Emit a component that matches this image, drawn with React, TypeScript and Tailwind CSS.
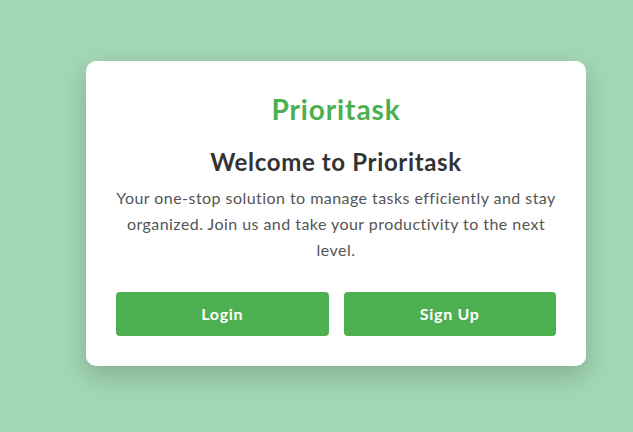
export default function App() {
  return (
    <div
      className="w-[633px] h-[432px] bg-[#a2d6b4] overflow-hidden pt-[61px] pl-[86px]"
      style={{ fontFamily: "Lato, 'Open Sans', sans-serif" }}
    >
      <div className="w-[500px] bg-white rounded-[10px] px-[30px] pt-[30px] pb-[30px] shadow-[0_10px_25px_rgba(0,0,0,0.18)] text-center">
        <div className="text-[28px] leading-[36px] font-bold tracking-[0.9px] text-[#4caf50]">Prioritask</div>
        <div className="mt-[19px] text-[24px] leading-[32px] font-bold tracking-[0.65px] text-[#333333]">Welcome to Prioritask</div>
        <p className="mt-[7px] text-[16px] leading-[26px] tracking-[0.45px] text-[#555555]">
          Your one-stop solution to manage tasks efficiently and stay organized. Join us and take your productivity to the next level.
        </p>
        <div className="mt-[29px] flex gap-[15px]">
          <button className="flex-1 h-[44px] rounded-[4px] bg-[#4caf50] text-white font-bold tracking-[0.7px] text-[16px]">Login</button>
          <button className="flex-1 h-[44px] rounded-[4px] bg-[#4caf50] text-white font-bold tracking-[0.7px] text-[16px]">Sign Up</button>
        </div>
      </div>
    </div>
  );
}
